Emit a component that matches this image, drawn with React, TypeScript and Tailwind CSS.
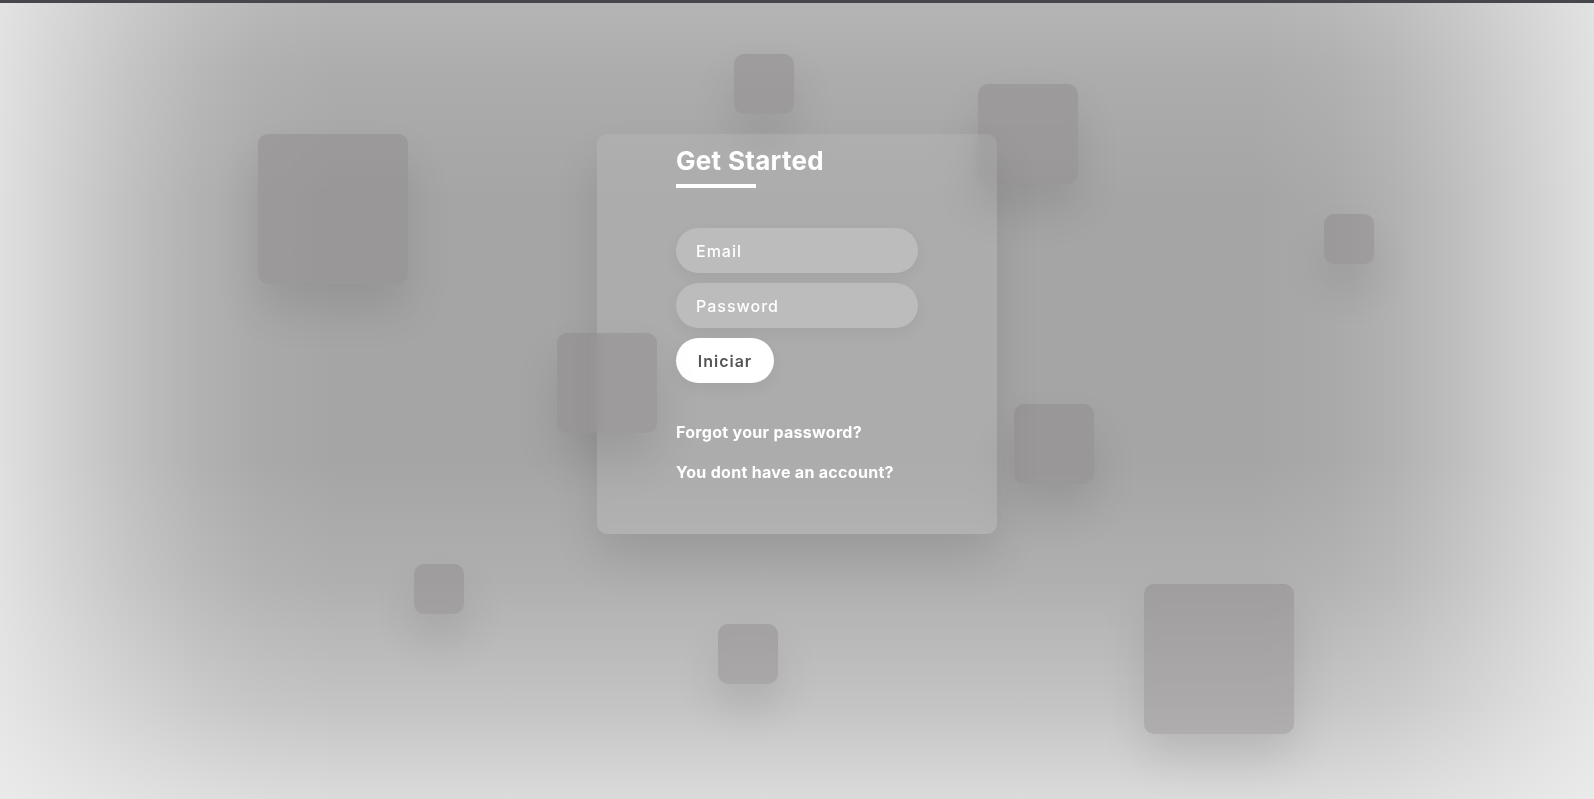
import React from 'react';

// decorative glass squares, page coordinates
const squares = [
  { x: 258, y: 134, s: 150 },
  { x: 734, y: 54, s: 60 },
  { x: 978, y: 84, s: 100 },
  { x: 1324, y: 214, s: 50 },
  { x: 1014, y: 404, s: 80 },
  { x: 414, y: 564, s: 50 },
  { x: 718, y: 624, s: 60 },
  { x: 1144, y: 584, s: 150 },
];

const Square = ({ x, y, s, front }: { x: number; y: number; s: number; front?: boolean }) => (
  <div
    className={`absolute rounded-[10px] bg-[rgba(136,129,133,0.4)] backdrop-blur-[5px] shadow-[0_25px_45px_rgba(0,0,0,0.1)] ${front ? 'z-20' : 'z-0'}`}
    style={{ left: x, top: y, width: s, height: s }}
  />
);

export default function App() {
  return (
    <div className="relative h-screen w-full overflow-hidden font-['Inter',sans-serif] bg-[#a5a5a5] bg-[linear-gradient(to_right,rgba(238,238,238,0.8)_0px,rgba(238,238,238,0.6)_60px,rgba(238,238,238,0.37)_130px,rgba(238,238,238,0.17)_200px,rgba(238,238,238,0.06)_260px,rgba(238,238,238,0)_340px,rgba(238,238,238,0)_calc(100%-340px),rgba(238,238,238,0.06)_calc(100%-260px),rgba(238,238,238,0.17)_calc(100%-200px),rgba(238,238,238,0.37)_calc(100%-130px),rgba(238,238,238,0.6)_calc(100%-60px),rgba(238,238,238,0.8)_100%),linear-gradient(to_bottom,rgba(238,238,238,0.22)_0px,rgba(238,238,238,0.1)_70px,rgba(238,238,238,0)_200px,rgba(238,238,238,0)_460px,rgba(238,238,238,0.14)_580px,rgba(238,238,238,0.42)_705px,rgba(238,238,238,0.74)_100%)]">
      <div className="h-[3px] w-full bg-[#46464c]" />

      {squares.map((sq, i) => (
        <Square key={i} {...sq} />
      ))}
      <Square x={557} y={333} s={100} front />

      <div className="flex justify-center pt-[131px]">
        <div className="relative z-10 flex h-[400px] w-[400px] justify-center rounded-[10px] bg-white/[0.08] backdrop-blur-[5px] shadow-[0_25px_45px_rgba(0,0,0,0.1)]">
          <div className="w-[242px] pt-[11px]">
            <h2 className="text-[26px] leading-[31px] font-bold tracking-[0.3px] text-white">Get Started</h2>
            <div className="mt-[8px] h-[4px] w-[80px] bg-white" />

            <form className="mt-[40px] flex flex-col gap-[10px]" onSubmit={e => e.preventDefault()}>
              <input
                type="email"
                placeholder="Email"
                className="h-[45px] w-full rounded-full bg-white/20 px-[20px] text-[16px] font-medium tracking-[1px] text-white placeholder:text-white outline-none shadow-[0_5px_15px_rgba(0,0,0,0.05)]"
              />
              <input
                type="password"
                placeholder="Password"
                className="h-[45px] w-full rounded-full bg-white/20 px-[20px] text-[16px] font-medium tracking-[1px] text-white placeholder:text-white outline-none shadow-[0_5px_15px_rgba(0,0,0,0.05)]"
              />
              <button
                type="submit"
                className="h-[45px] w-[98px] rounded-full bg-white text-[16px] font-semibold tracking-[1px] text-[#555] shadow-[0_5px_15px_rgba(0,0,0,0.05)]"
              >
                Iniciar
              </button>
            </form>

            <div className="mt-[37px] flex flex-col gap-[16px] text-[16px] leading-[24px] font-bold tracking-[0.3px] text-white">
              <a href="#">Forgot your password?</a>
              <a href="#">You dont have an account?</a>
            </div>
          </div>
        </div>
      </div>
    </div>
  );
}
